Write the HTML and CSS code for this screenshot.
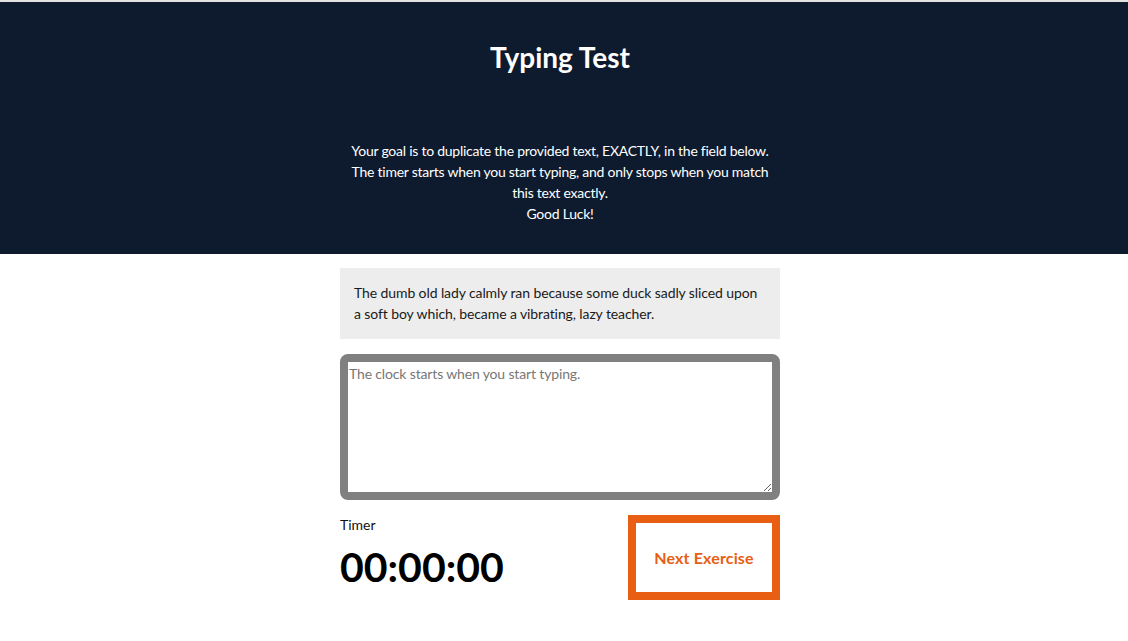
FILE: index.html
```html
<!DOCTYPE html>
<html lang="en">
<head>
<meta charset="utf-8">
<title>Typing Test</title>
<link rel="stylesheet" href="styles.css">
</head>
<body>
<header class="masthead">
  <div class="masthead-inner">
    <h1 class="title">Typing Test</h1>
    <p class="intro">Your goal is to duplicate the provided text, EXACTLY, in the field below. The timer starts when you start typing, and only stops when you match this text exactly.<br>Good Luck!</p>
  </div>
</header>
<main class="main">
  <div class="test">
    <div class="origin">The dumb old lady calmly ran because some duck sadly sliced upon a soft boy which, became a vibrating, lazy teacher.</div>
    <div class="area-wrap">
      <textarea class="area" placeholder="The clock starts when you start typing."></textarea>
    </div>
    <div class="meta">
      <div class="timer-col">
        <div class="timer-label">Timer</div>
        <div class="timer">00:00:00</div>
      </div>
      <button class="next">Next Exercise</button>
    </div>
  </div>
</main>
</body>
</html>
```
FILE: styles.css
```css
* { box-sizing: border-box; }
html, body { margin: 0; padding: 0; }
body {
  font-family: "Lato", "Liberation Sans", sans-serif;
  color: #111;
  background: #fff;
}
.masthead {
  background: #0e1b2e;
  border-top: 2px solid #e3e3e3;
  color: #fff;
  height: 254px;
  padding-right: 8px;
}
.masthead-inner {
  width: 440px;
  margin: 0 auto;
  text-align: center;
  padding-top: 37px;
}
.title {
  margin: 0;
  font-size: 28px;
  line-height: 36px;
  font-weight: 700;
}
.intro {
  margin: 65px 0 0;
  font-size: 14px;
  line-height: 21px;
  letter-spacing: -0.25px;
}
.main {
  padding-right: 8px;
}
.test {
  width: 440px;
  margin: 14px auto 0;
}
.origin {
  background: #ededed;
  padding: 14px 14px 15px;
  font-size: 14px;
  line-height: 21px;
  letter-spacing: -0.1px;
  color: #1a1a1a;
}
.area-wrap {
  margin-top: 15px;
}
.area {
  display: block;
  width: 440px;
  height: 146px;
  border: 8px solid #808080;
  border-radius: 8px;
  padding: 3px 1px 2px;
  font-family: "Lato", "Liberation Sans", sans-serif;
  font-size: 14px;
  line-height: 18px;
  letter-spacing: -0.15px;
  color: #222;
  outline: none;
  resize: vertical;
}
.area::placeholder { color: #777; }
.meta {
  margin-top: 15px;
  display: flex;
  justify-content: space-between;
  align-items: flex-start;
}
.timer-col {
  padding-top: 1px;
}
.timer-label {
  font-size: 14px;
  line-height: 18px;
  color: #111;
}
.timer {
  margin-top: 9px;
  font-size: 41px;
  line-height: 48px;
  font-weight: 700;
  color: #000;
}
.next {
  width: 152px;
  height: 85px;
  border: 8px solid #e85e12;
  background: #fff;
  color: #e85e12;
  font-family: "Lato", "Liberation Sans", sans-serif;
  font-size: 16px;
  letter-spacing: 0.15px;
  font-weight: 700;
  cursor: pointer;
  padding: 0;
}
```
